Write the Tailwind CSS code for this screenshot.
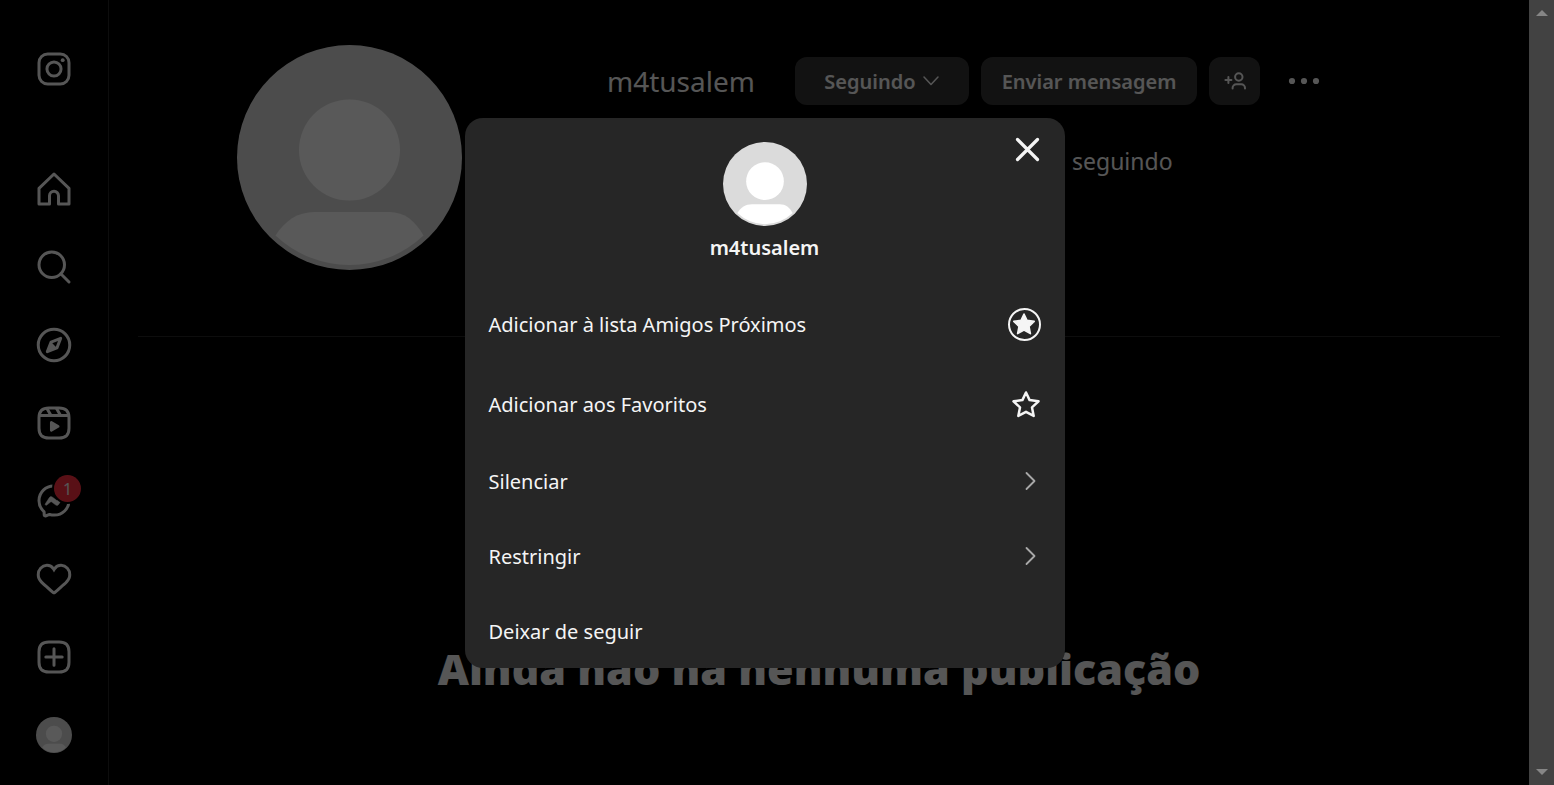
<!DOCTYPE html>
<html lang="pt-BR">
<head>
<meta charset="utf-8">
<meta name="viewport" content="width=device-width, initial-scale=1">
<title>m4tusalem</title>
<script src="https://cdn.jsdelivr.net/npm/@tailwindcss/browser@4"></script>
</head>
<body class="bg-black font-['Segoe_UI','Noto_Sans',sans-serif] text-[#f5f5f5]">
<svg class="hidden" aria-hidden="true">
  <symbol id="person" viewBox="0 0 225 225">
    <circle cx="112.5" cy="112.5" r="112.5" fill="#dbdbdb"/>
    <circle cx="112.5" cy="105" r="50.5" fill="#fff"/>
    <path d="M38.5 190.5C48 176 60 167 78 167H152C168 167 178 176 186.500 190.500A107.500 107.500 0 0 1 38.500 190.500Z" fill="#fff"/>
  </symbol>
</svg>
<div class="flex h-screen overflow-hidden">
  <div class="relative flex min-w-0 flex-1">
    <nav aria-label="Principal" class="flex w-[109px] shrink-0 flex-col items-center border-r border-[#262626] pt-[51px]">
      <a href="#" aria-label="Instagram" class="mb-[84px]">
        <svg class="size-9" viewBox="0 0 24 24" fill="none" stroke="currentColor" stroke-width="2"><rect x="2" y="2" width="20" height="20" rx="5.800"/><circle cx="12" cy="12" r="4.700"/><circle cx="17.800" cy="6.100" r="1.300" fill="currentColor" stroke="none"/></svg>
      </a>
      <div class="flex flex-col gap-[42px]">
        <a href="#" aria-label="Página inicial"><svg class="size-9" viewBox="0 0 24 24" fill="none" stroke="currentColor" stroke-width="2" stroke-linejoin="round"><path d="M9.005 16.545a2.997 2.997 0 0 1 2.997-2.997A2.997 2.997 0 0 1 15 16.545V22h7V11.543L12 2 2 11.543V22h7.005Z"/></svg></a>
        <a href="#" aria-label="Pesquisa"><svg class="size-9" viewBox="0 0 24 24" fill="none" stroke="currentColor" stroke-width="2" stroke-linecap="round"><path d="M19 10.500A8.500 8.500 0 1 1 10.500 2a8.500 8.500 0 0 1 8.500 8.500Z"/><path d="M16.511 16.511 22 22"/></svg></a>
        <a href="#" aria-label="Explorar"><svg class="size-9" viewBox="0 0 24 24" fill="none" stroke="currentColor" stroke-width="2" stroke-linecap="round" stroke-linejoin="round"><path d="m13.941 13.953-6.360 2.471 2.479-6.368 6.360-2.471Z"/><path d="m10.060 10.056 3.889 3.889-6.368 2.479Z" fill="currentColor" stroke="none"/><circle cx="12" cy="12" r="10.500"/></svg></a>
        <a href="#" aria-label="Reels"><svg class="size-9" viewBox="0 0 24 24" fill="none" stroke="currentColor" stroke-width="2" stroke-linejoin="round"><path d="M2.049 7.002h19.901M13.504 2.001l2.858 5.001M7.207 2.110l2.795 4.892"/><path d="M2 12.001v3.449c0 2.849.698 4.006 1.606 4.945.94.908 2.098 1.607 4.946 1.607h6.896c2.848 0 4.006-.699 4.946-1.607.908-.939 1.606-2.096 1.606-4.945V8.552c0-2.848-.698-4.006-1.606-4.945C19.454 2.699 18.296 2 15.448 2H8.552c-2.848 0-4.006.699-4.946 1.607C2.698 4.546 2 5.704 2 8.552Z"/><path fill="currentColor" stroke="none" d="M9.763 17.664a.908.908 0 0 1-.454-.787V11.630a.909.909 0 0 1 1.364-.788l4.545 2.624a.909.909 0 0 1 0 1.575l-4.545 2.624a.91.91 0 0 1-.91 0Z"/></svg></a>
        <a href="#" aria-label="Mensagens" class="relative"><svg class="size-9" viewBox="0 0 24 24" fill="none"><path stroke="currentColor" stroke-width="2" d="M12.003 2.001a9.705 9.705 0 1 1 0 19.400 10.876 10.876 0 0 1-2.895-.384.798.798 0 0 0-.533.040l-1.984.876a.801.801 0 0 1-1.123-.708l-.054-1.780a.806.806 0 0 0-.270-.569 9.490 9.490 0 0 1-3.140-7.175 9.650 9.650 0 0 1 10-9.700Z"/><path fill="currentColor" stroke="currentColor" stroke-width=".3" d="M17.790 10.132a.659.659 0 0 0-.962-.873l-2.556 2.050a.63.63 0 0 1-.758.002L11.060 9.470a1.576 1.576 0 0 0-2.277.420l-2.567 3.980a.659.659 0 0 0 .961.875l2.556-2.049a.63.63 0 0 1 .759-.002l2.452 1.840a1.576 1.576 0 0 0 2.278-.420Z"/></svg>
          <span class="absolute -top-2 left-[18px] flex size-[27px] items-center justify-center rounded-full bg-[#ff3040] text-base ring-2 ring-black">1</span></a>
        <a href="#" aria-label="Notificações"><svg class="size-9" viewBox="0 0 24 24" fill="currentColor"><path d="M16.792 3.904A4.989 4.989 0 0 1 21.500 9.122c0 3.072-2.652 4.959-5.197 7.222-2.512 2.243-3.865 3.469-4.303 3.752-.477-.309-2.143-1.823-4.303-3.752C5.141 14.072 2.500 12.167 2.500 9.122a4.989 4.989 0 0 1 4.708-5.218 4.210 4.210 0 0 1 3.675 1.941c.84 1.175.98 1.763 1.120 1.763s.278-.588 1.110-1.766a4.170 4.170 0 0 1 3.679-1.938m0-2a6.040 6.040 0 0 0-4.797 2.127 6.052 6.052 0 0 0-4.787-2.127A6.985 6.985 0 0 0 .5 9.122c0 3.610 2.550 5.827 5.015 7.970.283.246.569.494.853.747l1.027.918a44.998 44.998 0 0 0 3.518 3.018 2 2 0 0 0 2.174 0 45.263 45.263 0 0 0 3.626-3.115l.922-.824c.293-.260.590-.519.885-.774 2.334-2.025 4.980-4.320 4.980-7.940a6.985 6.985 0 0 0-6.708-7.218Z"/></svg></a>
        <a href="#" aria-label="Criar"><svg class="size-9" viewBox="0 0 24 24" fill="none" stroke="currentColor" stroke-width="2" stroke-linecap="round" stroke-linejoin="round"><path d="M2 12v3.450c0 2.849.698 4.005 1.606 4.944.94.909 2.098 1.608 4.946 1.608h6.896c2.848 0 4.006-.7 4.946-1.608C21.302 19.455 22 18.300 22 15.450V8.552c0-2.849-.698-4.006-1.606-4.945C19.454 2.700 18.296 2 15.448 2H8.552c-2.848 0-4.006.699-4.946 1.607C2.698 4.547 2 5.703 2 8.552Z"/><path d="M6.545 12.001h10.910M12.003 6.545v10.910"/></svg></a>
        <a href="#" aria-label="Perfil"><svg class="size-9"><use href="#person"/></svg></a>
      </div>
    </nav>

    <main class="min-w-0 flex-1 px-[29px] pt-[45px]">
      <header class="flex h-[292px] border-b border-[#262626] pl-[99px]">
        <svg class="size-[225px] shrink-0" role="img" aria-label="Foto do perfil de m4tusalem"><use href="#person"/></svg>
        <section class="ml-[145px] pt-3">
          <div class="flex h-12 items-center">
            <h2 class="w-[188px] text-[28px]">m4tusalem</h2>
            <button type="button" class="mr-3 flex h-12 w-[174px] items-center justify-center gap-1.5 rounded-xl bg-[#363636] text-xl font-semibold"><span class="pt-0.5">Seguindo</span><svg class="size-[18px]" viewBox="0 0 18 18" fill="none" stroke="currentColor" stroke-width="1.500" stroke-linecap="round" stroke-linejoin="round"><path d="m2 5 7 7.500L16 5"/></svg></button>
            <button type="button" class="mr-3 h-12 w-[216px] rounded-xl bg-[#363636] pt-0.5 text-xl font-semibold">Enviar mensagem</button>
            <button type="button" aria-label="Contas semelhantes" class="flex h-12 w-[51px] items-center justify-center rounded-xl bg-[#363636]"><svg class="size-6" viewBox="0 0 24 24" fill="none" stroke="currentColor" stroke-width="2" stroke-linecap="round"><circle cx="15.800" cy="8" r="3.700"/><path d="M9.600 19.500V19a3.700 3.700 0 0 1 3.700-3.700h5a3.700 3.700 0 0 1 3.700 3.700v.5M2.400 11h6M5.400 8v6"/></svg></button>
            <button type="button" aria-label="Opções" class="ml-[26px]"><svg class="size-9" viewBox="0 0 36 36" fill="currentColor"><circle cx="6" cy="18" r="3.100"/><circle cx="18" cy="18" r="3.100"/><circle cx="30" cy="18" r="3.100"/></svg></button>
          </div>
          <div class="mt-9 pl-[465px] text-[23px] leading-10">seguindo</div>
        </section>
      </header>
      <h1 class="mt-[299px] text-center text-[43px] leading-[66px] font-black whitespace-nowrap">Ainda não há nenhuma publicação</h1>
    </main>

    <div class="absolute inset-0 flex items-center justify-center bg-black/65">
      <div role="dialog" aria-modal="true" aria-labelledby="account" class="relative w-[600px] overflow-hidden rounded-[18px] bg-[#262626] text-xl text-[#f5f5f5]">
        <button type="button" aria-label="Fechar" class="absolute top-[13px] right-5"><svg class="size-9" viewBox="0 0 36 36" fill="none" stroke="currentColor" stroke-width="3.200" stroke-linecap="round"><path d="m8.500 8.500 20 20M28.500 8.500l-20 20"/></svg></button>
        <div class="flex h-[167px] flex-col items-center pt-6">
          <svg class="size-[84px]" role="img" aria-label="Foto do perfil"><use href="#person"/></svg>
          <h2 id="account" class="mt-2 leading-7 font-semibold">m4tusalem</h2>
        </div>
        <button type="button" class="flex h-[79px] w-full items-center justify-between px-6"><span class="pt-0.5">Adicionar à lista Amigos Próximos</span><svg class="size-[33px]" viewBox="0 0 33 33" fill="none" stroke="currentColor" stroke-linejoin="round"><circle cx="16.500" cy="16.500" r="15.500" stroke-width="2"/><path stroke-width="1.600" fill="currentColor" d="m16 6 3 6.400 7.200 1-5.200 5 1.400 7.200-6.400-3.500-6.400 3.500 1.400-7.200-5.200-5 7.200-1Z"/></svg></button>
        <button type="button" class="flex h-[79px] w-full items-center justify-between px-6 pt-0.5"><span class="pt-0.5">Adicionar aos Favoritos</span><svg class="size-[30px]" viewBox="0 0 30 30" fill="none" stroke="currentColor" stroke-width="2.500" stroke-linejoin="round"><path d="m15 3.500 3.600 7.600 8.900 1.200-6.500 6.100 1.700 8.500-7.700-4.100-7.700 4.100L9 18.400l-6.500-6.100 8.900-1.200Z"/></svg></button>
        <button type="button" class="flex h-[75px] w-full items-center justify-between px-6 pt-0.5"><span class="pt-0.5">Silenciar</span><svg class="size-6 text-[#a8a8a8]" viewBox="0 0 24 24" fill="none" stroke="currentColor" stroke-width="1.800" stroke-linecap="round" stroke-linejoin="round"><path d="m9.500 4 8 8-8 8"/></svg></button>
        <button type="button" class="flex h-[75px] w-full items-center justify-between px-6 pt-0.5"><span class="pt-0.5">Restringir</span><svg class="size-6 text-[#a8a8a8]" viewBox="0 0 24 24" fill="none" stroke="currentColor" stroke-width="1.800" stroke-linecap="round" stroke-linejoin="round"><path d="m9.500 4 8 8-8 8"/></svg></button>
        <button type="button" class="flex h-[75px] w-full items-center px-6 pt-0.5"><span class="pt-0.5">Deixar de seguir</span></button>
      </div>
    </div>
  </div>

  <div class="flex w-[25px] shrink-0 flex-col items-center justify-between bg-[#424242] py-2.5 text-[#868686]" aria-hidden="true">
    <svg class="h-1.5 w-3" viewBox="0 0 12 6" fill="currentColor"><path d="M6 0l6 6H0Z"/></svg>
    <svg class="h-1.5 w-3" viewBox="0 0 12 6" fill="currentColor"><path d="M6 6 0 0h12Z"/></svg>
  </div>
</div>
</body>
</html>
